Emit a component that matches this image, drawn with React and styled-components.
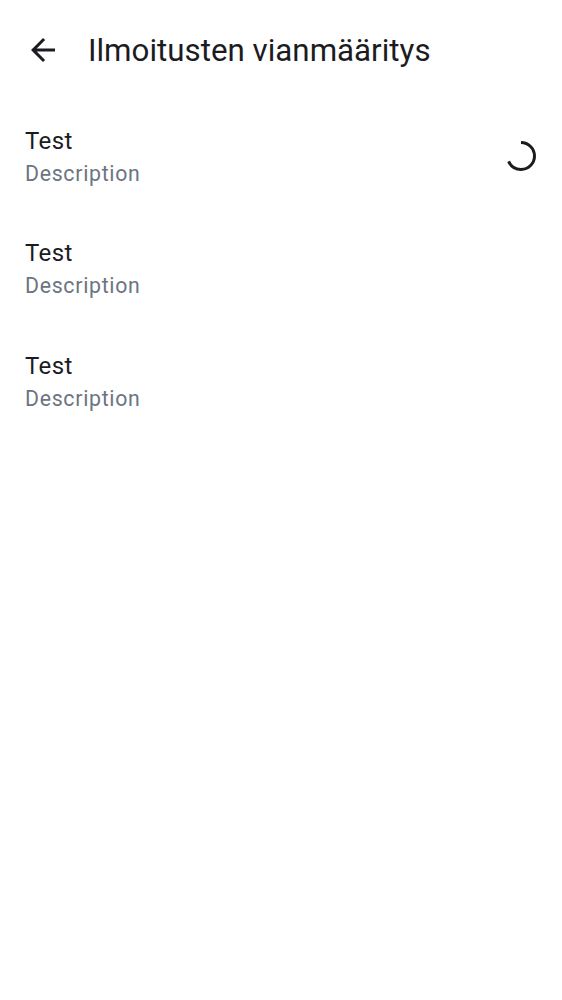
import React from "react";
import styled, { createGlobalStyle } from "styled-components";

const Global = createGlobalStyle`
  html, body { margin: 0; padding: 0; background: #ffffff; }
  body { font-family: Roboto, "Noto Sans", sans-serif; -webkit-font-smoothing: antialiased; }
`;

const Page = styled.div`
  width: 562px;
  min-height: 1000px;
  background: #ffffff;
  display: flex;
  flex-direction: column;
`;

const TopBar = styled.header`
  height: 100px;
  display: flex;
  align-items: center;
  padding: 0 0 0 7px;
  box-sizing: border-box;
`;

const BackButton = styled.button`
  width: 72px;
  height: 72px;
  border: 0;
  background: transparent;
  padding: 0;
  display: flex;
  align-items: center;
  justify-content: center;
  color: #1b1c1f;
  margin-right: 9px;
`;

const Title = styled.h1`
  margin: 0;
  font-size: 31.3px;
  font-weight: 400;
  color: #1b1c1f;
  letter-spacing: 0;
`;

const List = styled.ul`
  list-style: none;
  margin: 0;
  padding: 0;
`;

const Item = styled.li`
  height: 112.5px;
  display: flex;
  align-items: center;
  padding: 0 25px;
  box-sizing: border-box;
`;

const Texts = styled.div`
  flex: 1;
  display: flex;
  flex-direction: column;
  gap: 2px;
  margin-top: 1px;
`;

const Headline = styled.div`
  font-size: 24px;
  line-height: 32px;
  color: #1b1c1f;
  letter-spacing: 0.4px;
`;

const Supporting = styled.div`
  font-size: 21.3px;
  line-height: 30px;
  color: #6c7580;
  letter-spacing: 0.7px;
`;

const Spinner = styled.svg`
  width: 34px;
  height: 34px;
  margin-right: -1px;
`;

function ArrowBack() {
  return (
    <svg width="36" height="36" viewBox="0 0 24 24" fill="currentColor">
      <path d="M20 11H7.83l5.59-5.59L12 4l-8 8 8 8 1.41-1.41L7.83 13H20v-2z" />
    </svg>
  );
}

function Progress() {
  const r = 13.5;
  const c = 2 * Math.PI * r;
  const arc = (245 / 360) * c;
  return (
    <Spinner viewBox="0 0 34 34">
      <circle
        cx="17"
        cy="17"
        r={r}
        fill="none"
        stroke="#1b1c1f"
        strokeWidth="3"
        strokeDasharray={`${arc} ${c}`}
        transform="rotate(-90 17 17)"
      />
    </Spinner>
  );
}

const items = [
  { title: "Test", desc: "Description", loading: true },
  { title: "Test", desc: "Description", loading: false },
  { title: "Test", desc: "Description", loading: false },
];

export default function App() {
  return (
    <Page>
      <Global />
      <TopBar>
        <BackButton aria-label="Takaisin">
          <ArrowBack />
        </BackButton>
        <Title>Ilmoitusten vianmääritys</Title>
      </TopBar>
      <List>
        {items.map((it, i) => (
          <Item key={i}>
            <Texts>
              <Headline>{it.title}</Headline>
              <Supporting>{it.desc}</Supporting>
            </Texts>
            {it.loading && <Progress />}
          </Item>
        ))}
      </List>
    </Page>
  );
}
